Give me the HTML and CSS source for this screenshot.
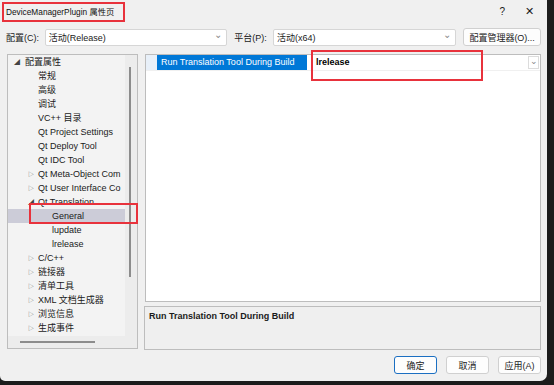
FILE: index.html
```html
<!DOCTYPE html>
<html lang="zh-CN">
<head>
  <meta charset="UTF-8">
  <title>DeviceManagerPlugin 属性页</title>
  <link rel="stylesheet" href="styles.css">
</head>
<body>
  <div class="window">
    <div class="titlebar">
      <span class="title">DeviceManagerPlugin 属性页</span>
      <span class="help">?</span>
      <span class="close">✕</span>
    </div>

    <div class="toolbar">
      <label class="lbl">配置(C):</label>
      <div class="select sel-config">活动(Release)<span class="chev">⌄</span></div>
      <label class="lbl lbl-platform">平台(P):</label>
      <div class="select sel-platform">活动(x64)<span class="chev">⌄</span></div>
      <button class="btn btn-manager">配置管理器(O)...</button>
    </div>

    <div class="main">
      <div class="tree-panel">
        <ul class="tree">
          <li class="lv0"><span class="tw open">◢</span>配置属性</li>
          <li class="lv1">常规</li>
          <li class="lv1">高级</li>
          <li class="lv1">调试</li>
          <li class="lv1">VC++ 目录</li>
          <li class="lv1">Qt Project Settings</li>
          <li class="lv1">Qt Deploy Tool</li>
          <li class="lv1">Qt IDC Tool</li>
          <li class="lv1c"><span class="tw">▷</span>Qt Meta-Object Com</li>
          <li class="lv1c"><span class="tw">▷</span>Qt User Interface Co</li>
          <li class="lv1c"><span class="tw open">◢</span>Qt Translation</li>
          <li class="lv2 selected">General</li>
          <li class="lv2">lupdate</li>
          <li class="lv2">lrelease</li>
          <li class="lv1c"><span class="tw">▷</span>C/C++</li>
          <li class="lv1c"><span class="tw">▷</span>链接器</li>
          <li class="lv1c"><span class="tw">▷</span>清单工具</li>
          <li class="lv1c"><span class="tw">▷</span>XML 文档生成器</li>
          <li class="lv1c"><span class="tw">▷</span>浏览信息</li>
          <li class="lv1c"><span class="tw">▷</span>生成事件</li>
        </ul>
        <div class="vscroll"><div class="vthumb"></div></div>
        <div class="hscroll"><div class="hthumb"></div></div>
        <div class="corner"></div>
        <div class="mark mark-general"></div>
      </div>

      <div class="right">
        <div class="grid">
          <div class="grid-row">
            <div class="gutter"></div>
            <div class="name">Run Translation Tool During Build</div>
            <div class="value">lrelease</div>
            <div class="drop">⌄</div>
          </div>
          <div class="mark mark-value"></div>
        </div>
        <div class="desc">Run Translation Tool During Build</div>
      </div>
    </div>

    <div class="footer">
      <button class="btn btn-ok">确定</button>
      <button class="btn">取消</button>
      <button class="btn">应用(A)</button>
    </div>
  </div>
</body>
</html>
```

FILE: styles.css
```css
body {
  margin: 0;
  background: #1c1c1c;
  font-family: "Liberation Sans", "Noto Sans CJK SC", sans-serif;
  font-size: 9px;
  color: #1a1a1a;
}
.window {
  width: 547px;
  height: 381px;
  background: #f0f0f0;
  border-radius: 0 0 7px 5px;
  padding: 0 6px 0 7px;
  box-sizing: border-box;
  display: flex;
  flex-direction: column;
}
.titlebar {
  height: 22px;
  display: flex;
  align-items: center;
  margin-left: -5px;
}
.title {
  font-size: 8.3px;
  color: #111;
  border: 2px solid #e8323c;
  padding: 0 9px 0 2px;
  white-space: nowrap;
  height: 20px;
  line-height: 16px;
  box-sizing: border-box;
  margin-top: 1px;
}
.help {
  margin-left: auto;
  font-size: 10px;
  margin-right: 20px;
}
.close {
  font-size: 11px;
  margin-right: 7px;
}
.toolbar {
  display: flex;
  align-items: center;
  height: 18px;
  margin-top: 6px;
  margin-left: -1px;
}
.lbl {
  width: 39px;
}
.lbl-platform {
  margin-left: 7px;
}
.select {
  position: relative;
  height: 17px;
  line-height: 16px;
  box-sizing: border-box;
  background: #fff;
  border: 1px solid #d6d6d6;
  border-radius: 2px;
  padding-left: 3px;
}
.sel-config { width: 183px; }
.sel-platform { width: 184px; }
.chev {
  position: absolute;
  right: 4px;
  top: -3px;
  color: #8a8a8a;
  font-size: 10px;
}
.btn {
  font-family: inherit;
  font-size: 9px;
  height: 18px;
  background: #fdfdfd;
  border: 1px solid #d0d0d0;
  border-radius: 3px;
  padding: 0;
  color: #1a1a1a;
}
.btn-manager {
  width: 78px;
  margin-left: 7px;
}
.main {
  display: flex;
  margin-top: 8px;
  gap: 7px;
  height: 296px;
}
.tree-panel {
  position: relative;
  width: 131px;
  height: 295px;
  box-sizing: border-box;
  border: 1px solid #bdbdbd;
  display: grid;
  grid-template-columns: 1fr 12px;
  grid-template-rows: 1fr 12px;
  background: #ececec;
}
.tree {
  list-style: none;
  margin: 0;
  padding: 0;
  background: #f3f3f3;
  overflow: hidden;
}
.tree li {
  height: 14px;
  line-height: 14px;
  white-space: nowrap;
  position: relative;
}
.lv0 { padding-left: 17px; }
.lv1 { padding-left: 30px; }
.lv1c { padding-left: 30px; }
.lv2 { padding-left: 44px; }
.tree li.selected {
  background: #ccccd8;
}
.tw {
  position: absolute;
  margin-left: -10px;
  font-size: 6px;
  color: #555;
}
.lv0 .tw { margin-left: -11px; color: #333; }
.tw.open { font-size: 6px; color: #444; }
.vscroll {
  position: relative;
}
.vthumb {
  position: absolute;
  left: 4px;
  top: 12px;
  width: 2px;
  height: 210px;
  background: #8c8c8c;
}
.hscroll {
  position: relative;
}
.hthumb {
  position: absolute;
  left: 12px;
  top: 5px;
  width: 75px;
  height: 2px;
  background: #8c8c8c;
}
.mark {
  position: absolute;
  border: 2px solid #e8323c;
  box-sizing: border-box;
}
.mark-general {
  left: 21px;
  top: 148px;
  width: 109px;
  height: 21px;
}
.right {
  display: flex;
  flex-direction: column;
  gap: 4px;
  width: 396px;
}
.grid {
  position: relative;
  height: 250px;
  box-sizing: border-box;
  border: 1px solid #bdbdbd;
  background: #fff;
}
.grid-row {
  display: flex;
  height: 15px;
  line-height: 15px;
  border-bottom: 1px solid #f0f0f0;
}
.gutter {
  width: 11px;
  background: #e8f0f9;
}
.name {
  width: 152px;
  background: #0078d7;
  color: #fff;
  padding-left: 4px;
  box-sizing: border-box;
  white-space: nowrap;
  border-right: 2px solid #fff;
}
.value {
  flex: 1;
  font-weight: bold;
  padding-left: 7px;
  color: #000;
}
.drop {
  width: 11px;
  height: 13px;
  margin: 1px 1px 0 0;
  box-sizing: border-box;
  border: 1px solid #dcdcdc;
  line-height: 8px;
  text-align: center;
  color: #888;
  font-size: 9px;
}
.mark-value {
  left: 165px;
  top: -5px;
  width: 172px;
  height: 31px;
}
.desc {
  height: 44px;
  box-sizing: border-box;
  border: 1px solid #bdbdbd;
  background: #efefef;
  font-weight: bold;
  padding: 4px 4px;
  margin-left: -1px;
}
.footer {
  display: flex;
  justify-content: flex-end;
  gap: 9px;
  margin-top: 6px;
}
.footer .btn {
  width: 43px;
  height: 18px;
}
.btn-ok {
  border: 1px solid #1b6fc2;
}
```
